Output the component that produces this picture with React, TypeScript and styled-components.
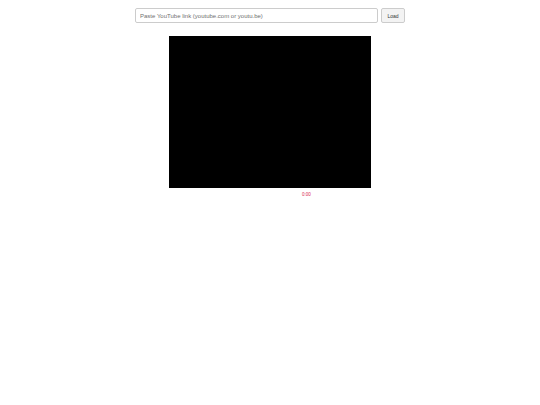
import styled, { createGlobalStyle } from 'styled-components'

const GlobalStyle = createGlobalStyle`
  body {
    margin: 0;
    background: #fff;
    font-family: "Liberation Sans", Arial, sans-serif;
  }
`

const Page = styled.main`
  display: flex;
  flex-direction: column;
  align-items: center;
  padding-top: 8px;
`

const Toolbar = styled.form`
  display: flex;
  gap: 3px;
  width: 270px;
`

const UrlInput = styled.input`
  flex: 1;
  height: 15px;
  box-sizing: border-box;
  border: 1px solid #ccc;
  border-radius: 2px;
  padding: 0 4px;
  font-family: "Liberation Sans", Arial, sans-serif;
  font-size: 6px;
  color: #333;
  outline: none;

  &::placeholder {
    color: #707070;
  }
`

const LoadButton = styled.button`
  width: 24px;
  height: 15px;
  box-sizing: border-box;
  border: 1px solid #ccc;
  border-radius: 2px;
  background: #f3f3f3;
  padding: 0;
  font-family: "Liberation Sans", Arial, sans-serif;
  font-size: 5px;
  color: #333;
`

const Player = styled.div`
  margin-top: 13px;
  width: 202px;
  height: 152px;
  background: #000;
`

const Status = styled.div`
  width: 202px;
  display: flex;
  padding-left: 133px;
  box-sizing: border-box;
  margin-top: 4px;
`

const Time = styled.span`
  font-size: 4.5px;
  line-height: 5px;
  color: #d82850;
`

function App() {
  return (
    <>
      <GlobalStyle />
      <Page>
        <Toolbar onSubmit={(e) => e.preventDefault()}>
          <UrlInput placeholder="Paste YouTube link (youtube.com or youtu.be)" />
          <LoadButton type="submit">Load</LoadButton>
        </Toolbar>
        <Player />
        <Status>
          <Time>0:00</Time>
        </Status>
      </Page>
    </>
  )
}

export default App
